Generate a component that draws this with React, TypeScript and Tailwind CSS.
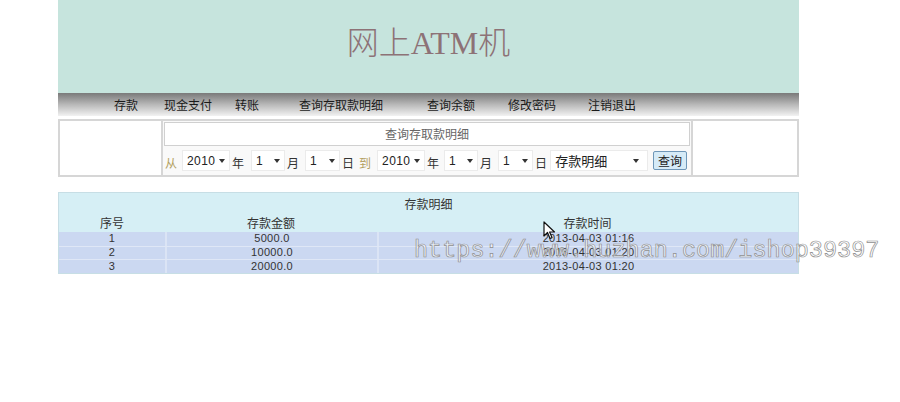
import React from "react";

const cjk = "font-['Noto_Sans_CJK_SC','Noto_Sans',sans-serif]";

const navItems = [
  { label: "存款", cls: "" },
  { label: "现金支付", cls: "ml-[26px]" },
  { label: "转账", cls: "ml-[23px]" },
  { label: "查询存取款明细", cls: "ml-[40px]" },
  { label: "查询余额", cls: "ml-[44px]" },
  { label: "修改密码", cls: "ml-[33px]" },
  { label: "注销退出", cls: "ml-[32px]" },
];

const rows = [
  { no: "1", amount: "5000.0", time: "2013-04-03 01:16" },
  { no: "2", amount: "10000.0", time: "2013-04-03 01:20" },
  { no: "3", amount: "20000.0", time: "2013-04-03 01:20" },
];

function Select({ value, className, wide }: { value: string; className: string; wide?: boolean }) {
  return (
    <div
      className={`flex h-[21px] items-center justify-between border border-[#ebebeb] bg-white pl-[4px] pr-[4px] ${className}`}
    >
      <span
        className={
          wide
            ? `${cjk} text-[13px] text-[#222]`
            : "font-['Liberation_Sans',sans-serif] text-[12px] tracking-[0.4px] text-[#222]"
        }
      >
        {value}
      </span>
      <span className="h-0 w-0 border-x-[3.5px] border-t-[4px] border-x-transparent border-t-[#333]" />
    </div>
  );
}

function Label({ text, gold, className = "" }: { text: string; gold?: boolean; className?: string }) {
  return (
    <span className={`${cjk} mt-[4px] text-[12px] leading-none ${gold ? "text-[#b3a060]" : "text-[#333]"} ${className}`}>
      {text}
    </span>
  );
}

export default function App() {
  return (
    <div className="relative min-h-[402px] w-full bg-white">
      <div className="ml-[58px] w-[741px]">
        {/* header */}
        <div className="flex h-[93px] items-center justify-center bg-[#c6e4dd] pb-[8px]">
          <h1 className="font-['Liberation_Serif','Noto_Sans_CJK_SC',serif] text-[32px] font-light text-[#8d7276]">
            网上ATM机
          </h1>
        </div>

        {/* nav */}
        <div className="flex h-[23px] items-center bg-gradient-to-b from-[#7a7a7a] via-[#b8b8b8] to-[#f2f2f2] pl-[56px]">
          {navItems.map((item) => (
            <span key={item.label} className={`${cjk} text-[12px] text-[#1a1a1a] ${item.cls}`}>
              {item.label}
            </span>
          ))}
        </div>

        {/* query */}
        <div className="mt-[3px] flex h-[58px] border-2 border-[#d6d6d6]">
          <div className="w-[103px] border-r-2 border-[#d6d6d6]" />
          <div className="flex w-[528px] flex-col gap-[2px] bg-[#f9f9f9] p-[1px]">
            <div className={`flex h-[24px] items-center justify-center border border-[#d0d0d0] bg-white ${cjk} text-[12px] text-[#666]`}>
              查询存取款明细
            </div>
            <div className="flex h-[25px] items-center pl-[1px]">
              <Label text="从" gold />
              <Select value="2010" className="ml-[5px] w-[48px]" />
              <Label text="年" className="ml-[2px]" />
              <Select value="1" className="ml-[7px] w-[34px]" />
              <Label text="月" className="ml-[2px]" />
              <Select value="1" className="ml-[6px] w-[35px]" />
              <Label text="日" className="ml-[2px]" />
              <Label text="到" gold className="ml-[5px]" />
              <Select value="2010" className="ml-[6px] w-[48px]" />
              <Label text="年" className="ml-[2px]" />
              <Select value="1" className="ml-[5px] w-[34px]" />
              <Label text="月" className="ml-[2px]" />
              <Select value="1" className="ml-[6px] w-[35px]" />
              <Label text="日" className="ml-[2px]" />
              <Select value="存款明细" wide className="ml-[3px] w-[98px] pr-[8px]" />
              <button
                className={`ml-[5px] flex h-[19px] w-[34px] items-center justify-center rounded-[2px] border border-[#6f97b8] bg-[#d6ebf7] ${cjk} text-[12px] text-[#222]`}
              >
                查询
              </button>
            </div>
          </div>
          <div className="flex-1 border-l-2 border-[#d6d6d6]" />
        </div>

        {/* result table */}
        <div className={`mt-[15px] border border-[#c7dee5] bg-[#d6eff5] ${cjk} text-[12px] text-[#333]`}>
          <div className="flex h-[21px] items-center justify-center">存款明细</div>
          <div className="flex h-[18px] items-center">
            <div className="w-[106px] text-center">序号</div>
            <div className="w-[212px] text-center">存款金额</div>
            <div className="flex-1 text-center">存款时间</div>
          </div>
          <div className="font-['Liberation_Sans',sans-serif] text-[11px] leading-none tracking-[0.3px] text-[#333]">
            {rows.map((row, i) => (
              <div
                key={row.no}
                className={`flex h-[13.5px] items-center bg-[#cbd8f1] ${i > 0 ? "border-t border-[#dfe7f6]" : ""}`}
              >
                <div className="w-[106px] text-center">{row.no}</div>
                <div className="flex h-full w-[212px] items-center justify-center border-l-2 border-[#dbe4f5]">
                  {row.amount}
                </div>
                <div className="flex h-full flex-1 items-center justify-center border-l-2 border-[#dbe4f5]">
                  {row.time}
                </div>
              </div>
            ))}
          </div>
        </div>
      </div>

      {/* watermark */}
      <div className="pointer-events-none absolute left-[414px] top-[233px] whitespace-nowrap font-['Liberation_Mono',monospace] text-[23.5px] text-white/60 [-webkit-text-stroke:0.7px_#8f8f8f]">
        https://www.huzhan.com/ishop39397
      </div>

      {/* cursor */}
      <svg className="absolute left-[543px] top-[221px]" width="13" height="19" viewBox="0 0 13 19">
        <path d="M1 1 L1 15 L4.5 11.5 L7 17.5 L9 16.6 L6.6 11 L11.5 11 Z" fill="white" stroke="#111" strokeWidth="1.2" strokeLinejoin="round" />
      </svg>
    </div>
  );
}
